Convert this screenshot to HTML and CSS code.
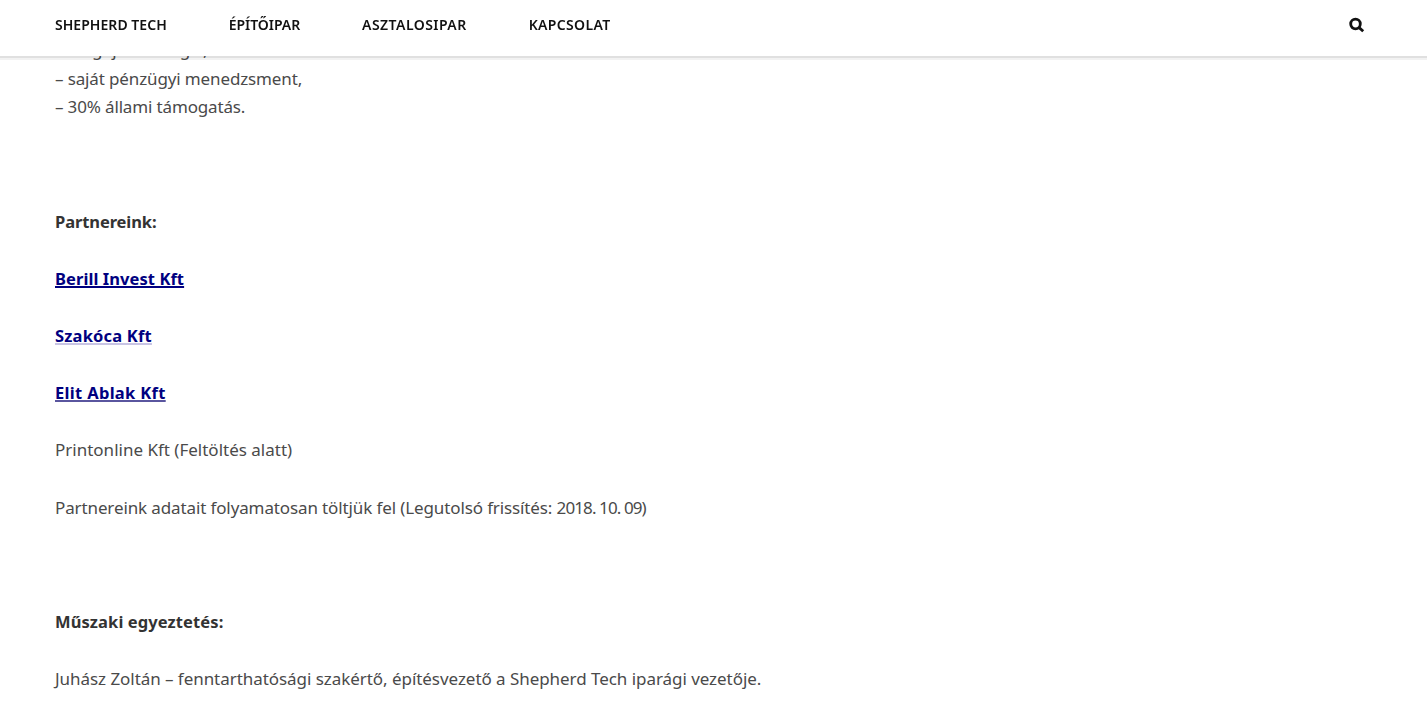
FILE: index.html
```html
<!DOCTYPE html>
<html lang="hu">

<head>
    <meta charset="UTF-8">
    <meta name="viewport" content="width=device-width, initial-scale=1.0">
    <title>Shepherd Tech</title>
    <link rel="stylesheet" href="styles.css">
</head>

<body>
    <header class="site-header">
        <nav class="menu">
            <a class="item-home" href="#">SHEPHERD TECH</a>
            <a class="item-build" href="#">ÉPÍTŐIPAR</a>
            <a class="item-wood" href="#">ASZTALOSIPAR</a>
            <a class="item-contact" href="#">KAPCSOLAT</a>
        </nav>
        <a class="search" href="#" aria-label="Keresés">
            <svg width="16" height="16" viewBox="0 0 16 16">
                <circle cx="6.5" cy="7" r="4.8" />
                <path d="M10.1 10.6L14.2 14.3" />
            </svg>
        </a>
    </header>
    <main class="content">
        <p>
            <span class="l-energy">– megújuló energia,</span><br>
            <span class="l-finance">– saját pénzügyi menedzsment,</span><br>
            <span class="l-support">– 30% állami támogatás.</span>
        </p>
        <p>&nbsp;</p>
        <p><strong class="l-partners">Partnereink:</strong></p>
        <p><a class="l-berill" href="#">Berill Invest Kft</a></p>
        <p><a class="l-szakoca" href="#">Szakóca Kft</a></p>
        <p><a class="l-elit" href="#">Elit Ablak Kft</a></p>
        <p>Printonline Kft (Feltöltés alatt)</p>
        <p><span class="l-update">Partnereink adatait folyamatosan töltjük fel (Legutolsó frissítés: <span class="date">2018. 10. 09)</span></span></p>
        <p>&nbsp;</p>
        <p><strong class="l-tech">Műszaki egyeztetés:</strong></p>
        <p><span class="l-juhasz">Juhász Zoltán – fenntarthatósági szakértő, építésvezető a Shepherd Tech iparági vezetője.</span></p>
    </main>
</body>

</html>
```
FILE: styles.css
```css
body {
    margin: 0;
    height: 721px;
    overflow: hidden;
    background: #fff;
    color: #4a4a4a;
    font-family: "Noto Sans", "Open Sans", sans-serif;
    font-size: 17px;
    line-height: 28.6px;
}

.site-header {
    position: fixed;
    top: 0;
    left: 0;
    right: 0;
    display: flex;
    justify-content: space-between;
    box-sizing: border-box;
    height: 56px;
    padding: 0 62px 0 55px;
    background: #fff;
    box-shadow: 0 2px 0 rgba(0, 0, 0, 0.08), 0 4px 0 rgba(0, 0, 0, 0.05);
}

.menu {
    display: flex;
    gap: 62px;
}

.menu a {
    color: #111;
    font-size: 14px;
    font-weight: 600;
    line-height: 50px;
    text-decoration: none;
    white-space: nowrap;
}

.menu .item-home {
    letter-spacing: 0.04px;
}

.menu .item-build {
    letter-spacing: -0.06px;
}

.menu .item-wood {
    letter-spacing: 0.45px;
}

.menu .item-contact {
    letter-spacing: 0.35px;
}

.search {
    display: flex;
    margin-top: 17px;
    height: 16px;
}

.search svg {
    fill: none;
    stroke: #111;
    stroke-width: 2.8;
}

.content {
    padding: 36px 55px 0;
}

.content p {
    margin: 0 0 28.6px;
    white-space: nowrap;
}

.content strong {
    color: #333;
    font-size: 16.5px;
    font-weight: 700;
}

.content a {
    color: #000080;
    font-size: 16.5px;
    font-weight: 700;
    text-decoration-thickness: 2px;
    text-decoration-skip-ink: none;
}

.l-energy {
    letter-spacing: -0.35px;
}

.l-finance {
    letter-spacing: -0.13px;
}

.l-support {
    letter-spacing: -0.15px;
}

.l-partners {
    letter-spacing: -0.1px;
}

.l-berill {
    letter-spacing: 0.07px;
}

.l-szakoca {
    letter-spacing: 0.19px;
    text-decoration-color: #c8c4e4;
}

.l-elit {
    letter-spacing: 0.32px;
    text-decoration-color: #5a569f;
}

.l-update {
    letter-spacing: -0.12px;
}

.l-update .date {
    letter-spacing: -0.9px;
}

.l-tech {
    letter-spacing: 0.1px;
}

.l-juhasz {
    letter-spacing: -0.05px;
}
```
